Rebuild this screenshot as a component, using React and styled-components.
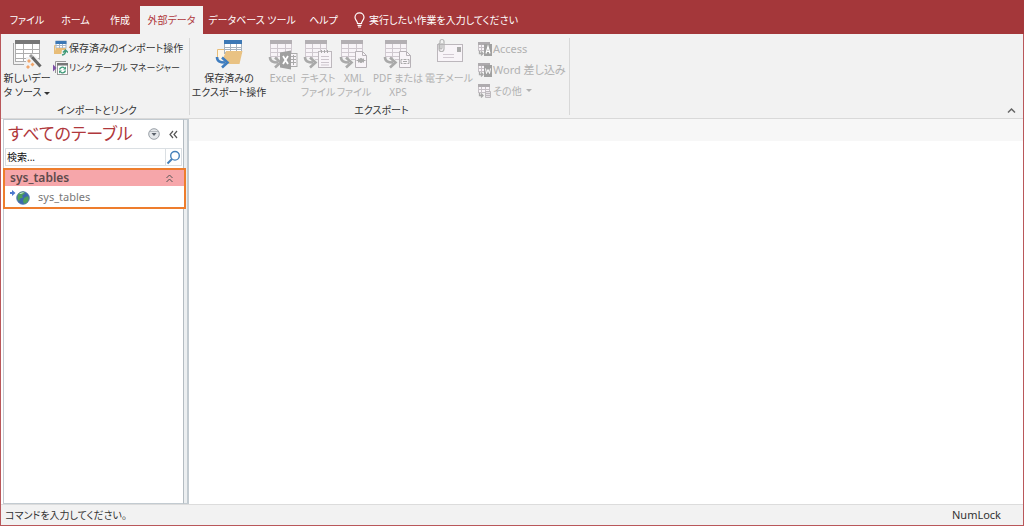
import React from "react";
import styled, { createGlobalStyle, css } from "styled-components";

const GlobalStyle = createGlobalStyle`
  *, *::before, *::after { box-sizing: border-box; }
  body { margin: 0; }
  body, button, input {
    font-family: "Noto Sans", "Noto Sans CJK JP", sans-serif;
    font-size: 11px;
    line-height: 14px;
    font-feature-settings: "palt";
    color: #333;
  }
  button { border: 0; padding: 0; background: none; }
  h1, h2 { margin: 0; font-weight: 400; }
  svg { display: block; flex: none; }
`;

const Window = styled.div`
  display: flex;
  flex-direction: column;
  min-height: 100vh;
  border: 1px solid #b9575a;
  border-top: 0;
  background: #fff;
`;

const TitleBar = styled.header`
  display: flex;
  align-items: flex-end;
  height: 34px;
  margin: 0 -1px;
  padding-left: 3px;
  background: #a4373a;
`;

const TabList = styled.div`
  display: flex;
  align-items: flex-end;
`;

const Tab = styled.button`
  width: ${(p) => p.$width}px;
  height: 28px;
  white-space: nowrap;
  color: #fff;
  font-size: 10px;
  ${(p) => p.$active && css`
    background: #f2f2f2;
    color: #b0383c;
  `}
`;

const TellMe = styled.button`
  display: flex;
  align-items: center;
  gap: 4px;
  height: 28px;
  margin-left: 8px;
  color: #fff;
  font-size: 10px;
`;

const Ribbon = styled.section`
  display: flex;
  height: 85px;
  background: #f2f2f2;
  border-bottom: 1px solid #d9d9d9;
`;

const Group = styled.div`
  display: flex;
  flex-direction: column;
  justify-content: space-between;
  padding: 4px 0 0 3px;
  width: ${(p) => p.$width}px;
  position: relative;
  &::after {
    content: "";
    position: absolute;
    right: 0;
    top: 4px;
    bottom: 3px;
    border-right: 1px solid #d8d8d8;
  }
`;

const Commands = styled.div`
  display: flex;
  align-items: flex-start;
`;

const GroupLabel = styled.h2`
  font-size: 10px;
  line-height: 16px;
  text-align: center;
`;

const BigButton = styled.button`
  display: flex;
  flex-direction: column;
  align-items: center;
  gap: 1px;
  width: ${(p) => p.$width}px;
  white-space: nowrap;
  color: ${(p) => (p.disabled ? "#b1b1b1" : "#333")};
`;

const ButtonText = styled.span`
  display: block;
  text-align: center;
  font-size: ${(p) => p.$size || 10}px;
`;

const Stack = styled.div`
  display: flex;
  flex-direction: column;
  padding-left: 3px;
`;

const SmallButton = styled.button`
  display: flex;
  align-items: center;
  gap: 1px;
  height: ${(p) => (p.disabled ? 21 : 20)}px;
  white-space: nowrap;
  font-size: ${(p) => p.$size || 10}px;
  color: ${(p) => (p.disabled ? "#b1b1b1" : "#333")};
`;

const Caret = styled.span`
  display: inline-block;
  margin-left: 3px;
  vertical-align: middle;
  border: 3px solid transparent;
  border-top-color: currentColor;
  border-bottom: 0;
`;

const Collapse = styled.button`
  margin: auto 7px 4px auto;
`;

const Body = styled.div`
  display: flex;
  flex: 1;
  min-height: 0;
`;

const NavPane = styled.aside`
  position: relative;
  width: 181px;
  margin-left: 2px;
  border: 1px solid #c3cbd1;
  border-right-color: #b4bcc2;
`;

const NavHeader = styled.div`
  display: flex;
  align-items: center;
  height: 28px;
  padding: 0 5px 0 4px;
`;

const NavTitle = styled.h1`
  flex: 1;
  font-size: 17px;
  line-height: 26px;
  white-space: nowrap;
  color: #b0383c;
`;

const NavTools = styled.div`
  display: flex;
  align-items: center;
  gap: 9px;
`;

const SearchBox = styled.label`
  display: flex;
  align-items: center;
  height: 18px;
  margin: 0 1px;
  border: 1px solid #dadfe3;
`;

const SearchInput = styled.input`
  flex: 1;
  min-width: 0;
  height: 16px;
  padding: 0 1px;
  border: 0;
  border-right: 1px solid #dadfe3;
  outline: 0;
  font-size: 10px;
  &::placeholder { color: #111; opacity: 1; }
`;

const TableGroup = styled.div`
  position: absolute;
  left: -1px;
  right: -3px;
  top: 48px;
  border: 2px solid #ee7d2d;
  background: #fff;
`;

const TableGroupHeader = styled.button`
  display: flex;
  align-items: center;
  justify-content: space-between;
  width: 100%;
  height: 16px;
  padding: 0 10px 0 5px;
  background: #f6a6aa;
  font-size: 12px;
  font-weight: 600;
  color: #5e4a4c;
`;

const TableItem = styled.button`
  display: flex;
  align-items: center;
  gap: 7px;
  width: 100%;
  height: 21px;
  padding-left: 4px;
  color: #777;
`;

const Splitter = styled.div`
  width: 5px;
  background: #eceff1;
  border: 1px solid #c3cbd1;
  border-left: 0;
  border-right: 2px solid #c3cbd1;
`;

const Workspace = styled.main`
  flex: 1;
  border-top: 22px solid #f7f7f7;
  background: #fff;
`;

const StatusBar = styled.footer`
  display: flex;
  align-items: center;
  justify-content: space-between;
  height: 21px;
  padding: 0 22px 0 4px;
  background: #f2f2f2;
  border-top: 1px solid #dcdcdc;
  font-size: 10px;
`;

const Key = styled.span`
  font-size: 11px;
`;

function Grid({ x = 0, y = 0, w = 22, h = 20, head = "#b3afb3", line = "#cfc8cf", fill = "#f8f4f8" }) {
  const cw = w / 3;
  const rh = (h - 4) / 4;
  return (
    <g>
      <rect x={x + 0.5} y={y + 0.5} width={w - 1} height={h - 1} fill={fill} stroke={line} />
      {[1, 2].map((i) => <path key={i} d={`M${Math.round(x + cw * i) + 0.5} ${y + 4}v${h - 4}`} stroke={line} />)}
      {[1, 2, 3].map((i) => <path key={i} d={`M${x} ${Math.round(y + 4 + rh * i) + 0.5}h${w}`} stroke={line} />)}
      <rect x={x} y={y} width={w} height="4" fill={head} />
    </g>
  );
}

function SweepArrow({ x = 0, y = 18, color = "#a9a9a9" }) {
  return (
    <g transform={`translate(${x} ${y})`}>
      <path d="M1 1C1 5.5 4 6.5 9 6.5" fill="none" stroke="#f2f2f2" strokeWidth="5" />
      <path d="M1 1C1 5.5 4 6.5 9 6.5" fill="none" stroke={color} strokeWidth="2.6" />
      <path d="M6 1.5L11.500 6.5L6 11.500" fill="none" stroke={color} strokeWidth="2.6" />
    </g>
  );
}

function NewSourceIcon() {
  return (
    <svg width="30" height="32" viewBox="0 0 30 32" aria-hidden="true">
      <path d="M1.500 5V26.500H12" fill="none" stroke="#a5a5a5" />
      <Grid x={3} y={2} w={25} h={22} head="#777" line="#adadad" fill="#fff" />
      <path d="M14 19h5v-3h2l8 7v9H14z" fill="#f2f2f2" />
      <path d="M20 19L28.500 28.500" stroke="#666" strokeWidth="3" />
      <path d="M18 17l2 2" stroke="#999" strokeWidth="3" />
      <g fill="#f0a66c">
        <path d="M17 21l2 2-2 2-2-2z" />
        <path d="M20.500 24.500l2 2-2 2-2-2z" />
        <path d="M16 27l2 2-2 2-2-2z" />
      </g>
    </svg>
  );
}

function SavedImportIcon() {
  return (
    <svg width="15" height="16" viewBox="0 0 15 16" aria-hidden="true">
      <path d="M1.500 14V5.500H4" fill="#f8e7c9" stroke="#e7bd77" />
      <rect x="3" y="1" width="10" height="7" fill="#fff" stroke="#a7b7c8" strokeWidth="1" />
      <path d="M6.500 3v5M9.500 3v5M3 5.500h10" stroke="#a7b7c8" />
      <rect x="2.500" y="1" width="11" height="3" fill="#3c78b5" />
      <path d="M3 8h10l-1 6H1z" fill="#e8bd78" />
      <path d="M9 10h6v6H8z" fill="#f2f2f2" />
      <path d="M9 15q3.500-.5 3.500-4M10 12.500l2.500-2.500 2.500 2.500" fill="none" stroke="#3f9a78" strokeWidth="1.500" />
    </svg>
  );
}

function LinkManagerIcon() {
  return (
    <svg width="15" height="16" viewBox="0 0 15 16" aria-hidden="true">
      <path d="M2.500 13V1.500H13" fill="none" stroke="#999" />
      <rect x="4.500" y="3.500" width="10" height="11" fill="#fff" stroke="#999" />
      <rect x="4" y="3" width="11" height="2.500" fill="#777" />
      <path d="M0 4.500l3.500 3.500-3.500 3.500z" fill="#7d4fa5" />
      <path d="M6.500 9.500a3 3 0 0 1 5-1.500M12.500 10.500a3 3 0 0 1-5 1.500" fill="none" stroke="#3f9a78" strokeWidth="1.300" />
      <path d="M13 6.500v3h-3zM6 13.500v-3h3z" fill="#3f9a78" />
    </svg>
  );
}

function SavedExportIcon() {
  return (
    <svg width="28" height="32" viewBox="0 0 28 32" aria-hidden="true">
      <path d="M2.500 22V11.500H9" fill="#fff8ea" stroke="#e8bd78" />
      <path d="M3 12h7v13H3z" fill="#fdf6e8" />
      <Grid x={9} y={2} w={18} h={14} head="#3c78b5" line="#a7b3bf" fill="#fff" />
      <path d="M11 13h16.500l-3 13H6z" fill="#e9c283" />
      <SweepArrow x={1} y={18} color="#3f7dbf" />
    </svg>
  );
}

function ExportIcon({ kind }) {
  return (
    <svg width="30" height="32" viewBox="0 0 30 32" aria-hidden="true">
      <Grid x={2} y={2} w={22} h={20} />
      <path d="M1 20h11v10H1z" fill="#f2f2f2" />
      <SweepArrow x={1} y={18} />
      {kind === "excel" && (
        <g>
          <rect x="21" y="15.500" width="8" height="13" fill="#f6f3f6" stroke="#aaa" />
          <path d="M23 18.500h5M23 21.500h5M23 24.500h5M25.500 17v10" stroke="#aaa" />
          <path d="M12 14.500l11-2v19l-11-2z" fill="#a0a0a0" />
          <path d="M15 18l5 8M20 18l-5 8" stroke="#fff" strokeWidth="1.800" />
        </g>
      )}
      {kind === "text" && (
        <g>
          <rect x="15.500" y="13.500" width="13" height="16" fill="#f8f4f8" stroke="#bdb8bd" />
          <path d="M18.500 12v3M21.500 12v3M24.500 12v3" stroke="#aaa" />
          <path d="M18 18.500h8M18 21.500h8M18 24.500h8M18 27h8" stroke="#ccc5cc" />
        </g>
      )}
      {(kind === "xml" || kind === "pdf") && (
        <g>
          <path d="M16.500 13.500h7l4 4v12h-11z" fill="#f8f4f8" stroke="#b7b2b7" />
          <path d="M23.500 13.500v4h4" fill="none" stroke="#b7b2b7" />
        </g>
      )}
      {kind === "xml" && (
        <g stroke="#aaa" fill="none">
          <path d="M17.500 22.500h9M19.500 20.500v4M24.500 20.500v4" />
          <circle cx="22" cy="22.500" r="2" fill="#aaa" />
        </g>
      )}
      {kind === "pdf" && (
        <path d="M19.500 21.500h-1.500v4h1.500M24.500 21.500h1.500v4h-1.500M20 23.500h4M20.500 21.500h3M20.500 25.500h3" fill="none" stroke="#aaa" />
      )}
    </svg>
  );
}

function MailIcon() {
  return (
    <svg width="30" height="32" viewBox="0 0 30 32" aria-hidden="true">
      <rect x="3.500" y="6.500" width="25" height="17" fill="#f8f4f8" stroke="#bcb7bc" />
      <rect x="23" y="9" width="4" height="5" fill="#aaa" />
      <path d="M9 16.500h11M9 19.500h11" stroke="#d2cad2" />
      <path d="M5 5v6a2.500 2.500 0 0 0 5 0V3.500a2 2 0 0 0-4 0V10a1 1 0 0 0 2 0V5" fill="none" stroke="#b4b4b4" strokeWidth="1.200" />
    </svg>
  );
}

function SmallExportIcon({ kind }) {
  return (
    <svg width="15" height="16" viewBox="0 0 15 16" aria-hidden="true">
      <rect x="1.500" y="1.500" width="11" height="8" fill="#f8f4f8" stroke="#c5c0c5" />
      <path d="M4.500 3v7M8.500 3v7M1 6.500h11" stroke="#c5c0c5" />
      <rect x="1" y="1" width="12" height="3" fill="#aeabae" />
      <path d="M2.500 10v2.500h3M4 10.500l2 2-2 2" fill="none" stroke="#a8a8a8" strokeWidth="1.300" />
      {kind === "other" ? (
        <path d="M8.500 8.500h5v6h-5zM9 10.500h5M9 12.500h5" fill="#e5e0e5" stroke="#bdb9bd" />
      ) : (
        <g>
          <rect x="7" y="3" width="8" height="12" fill="#a0a0a0" />
          {kind === "access"
            ? <path d="M9 12.500l2-7 2 7M9.500 10.500h3" fill="none" stroke="#fff" strokeWidth="1.200" />
            : <path d="M8.500 6.500l1 5 1.500-4 1.500 4 1-5" fill="none" stroke="#fff" />}
        </g>
      )}
    </svg>
  );
}

function BulbIcon() {
  return (
    <svg width="11" height="16" viewBox="0 0 11 16" fill="none" stroke="#fff" strokeWidth="1.200" aria-hidden="true">
      <path d="M3.500 11.500C3.500 9 1 8.300 1 5.300a4.500 4.500 0 0 1 9 0c0 3-2.500 3.700-2.500 6.200z" />
      <path d="M3.500 13.300h4M4 15h3" />
    </svg>
  );
}

function Chevrons({ dir }) {
  return (
    <svg width="9" height="9" viewBox="0 0 9 9" fill="none" stroke="#555" aria-hidden="true">
      {dir === "left"
        ? <path d="M4 1L1 4.500L4 8M8 1L5 4.500L8 8" strokeWidth="1.200" />
        : <path d="M1.500 4L4.500 1L7.500 4M1.500 8L4.500 5L7.500 8" />}
    </svg>
  );
}

function DropCircle() {
  return (
    <svg width="12" height="12" viewBox="0 0 12 12" aria-hidden="true">
      <circle cx="6" cy="6" r="5.300" fill="#e4e7ea" stroke="#9aa0a7" />
      <path d="M2 3.500h8" stroke="#b5babf" />
      <path d="M3.500 5h5L6 8z" fill="#59606a" />
    </svg>
  );
}

function SearchIcon() {
  return (
    <svg width="15" height="15" viewBox="0 0 15 15" fill="none" aria-hidden="true">
      <circle cx="9" cy="5.800" r="4.300" stroke="#4580ba" strokeWidth="1.400" />
      <path d="M6 9L1.500 13.500" stroke="#4580ba" strokeWidth="2" />
    </svg>
  );
}

function GlobeLinkIcon() {
  return (
    <svg width="22" height="16" viewBox="0 0 22 16" aria-hidden="true">
      <path d="M1 3h2V1l3.500 3L3 7V5H1z" fill="#4b78cf" />
      <circle cx="14" cy="9" r="6.500" fill="#3d68ae" />
      <path d="M9 5q2-3 6-2.500l1 2-3 2 1 2-3 1-1 3q-2.500-3-1-7.500zM15 9l4-2 1 3-2 4-3 1-1-3z" fill="#4da05a" />
      <path d="M10 5q2-2 5-2-1 2-5 2z" fill="#c8e6d8" />
      <circle cx="14" cy="9" r="6.300" fill="none" stroke="#5d7fae" strokeWidth="0.700" />
    </svg>
  );
}

const tabs = [
  { label: "ファイル", width: 48 },
  { label: "ホーム", width: 49 },
  { label: "作成", width: 40 },
  { label: "外部データ", width: 63, active: true },
  { label: "データベース ツール", width: 98 },
  { label: "ヘルプ", width: 45 },
];

const exportsList = [
  { key: "excel", lines: ["Excel"], width: 35, size: 11 },
  { key: "text", lines: ["テキスト", "ファイル"], width: 36 },
  { key: "xml", lines: ["XML", "ファイル"], width: 36 },
  { key: "pdf", lines: ["PDF または", "XPS"], width: 52 },
];

export default function App() {
  return (
    <Window>
      <GlobalStyle />
      <TitleBar>
        <TabList role="tablist">
          {tabs.map((t) => (
            <Tab key={t.label} role="tab" aria-selected={!!t.active} $active={t.active} $width={t.width}>
              {t.label}
            </Tab>
          ))}
        </TabList>
        <TellMe><BulbIcon />実行したい作業を入力してください</TellMe>
      </TitleBar>

      <Ribbon>
        <Group $width={189}>
          <Commands>
            <BigButton $width={46}>
              <NewSourceIcon />
              <ButtonText>新しいデー<br />タ ソース<Caret /></ButtonText>
            </BigButton>
            <Stack>
              <SmallButton><SavedImportIcon />保存済みのインポート操作</SmallButton>
              <SmallButton $size={9}><LinkManagerIcon />リンク テーブル マネージャー</SmallButton>
            </Stack>
          </Commands>
          <GroupLabel>インポートとリンク</GroupLabel>
        </Group>
        <Group $width={380}>
          <Commands>
            <BigButton $width={72}>
              <SavedExportIcon />
              <ButtonText>保存済みの<br />エクスポート操作</ButtonText>
            </BigButton>
            {exportsList.map((e) => (
              <BigButton key={e.key} disabled $width={e.width}>
                <ExportIcon kind={e.key} />
                <ButtonText $size={e.size}>
                  {e.lines[0]}
                  {e.lines[1] && <><br />{e.lines[1]}</>}
                </ButtonText>
              </BigButton>
            ))}
            <BigButton disabled $width={50}>
              <MailIcon />
              <ButtonText>電子メール</ButtonText>
            </BigButton>
            <Stack>
              <SmallButton disabled $size={11}><SmallExportIcon kind="access" />Access</SmallButton>
              <SmallButton disabled $size={11}><SmallExportIcon kind="word" />Word 差し込み</SmallButton>
              <SmallButton disabled><SmallExportIcon kind="other" />その他<Caret /></SmallButton>
            </Stack>
          </Commands>
          <GroupLabel>エクスポート</GroupLabel>
        </Group>
        <Collapse aria-label="リボンを折りたたむ">
          <svg width="9" height="7" viewBox="0 0 9 7" fill="none" stroke="#666" strokeWidth="1.500" aria-hidden="true">
            <path d="M1 5.500L4.500 2L8 5.500" />
          </svg>
        </Collapse>
      </Ribbon>

      <Body>
        <NavPane>
          <NavHeader>
            <NavTitle>すべてのテーブル</NavTitle>
            <NavTools>
              <button aria-label="カテゴリ"><DropCircle /></button>
              <button aria-label="閉じる"><Chevrons dir="left" /></button>
            </NavTools>
          </NavHeader>
          <SearchBox>
            <SearchInput type="text" aria-label="検索" placeholder="検索..." />
            <SearchIcon />
          </SearchBox>
          <TableGroup>
            <TableGroupHeader>sys_tables<Chevrons dir="up" /></TableGroupHeader>
            <TableItem><GlobeLinkIcon />sys_tables</TableItem>
          </TableGroup>
        </NavPane>
        <Splitter />
        <Workspace />
      </Body>

      <StatusBar>
        <span>コマンドを入力してください。</span>
        <Key>NumLock</Key>
      </StatusBar>
    </Window>
  );
}
